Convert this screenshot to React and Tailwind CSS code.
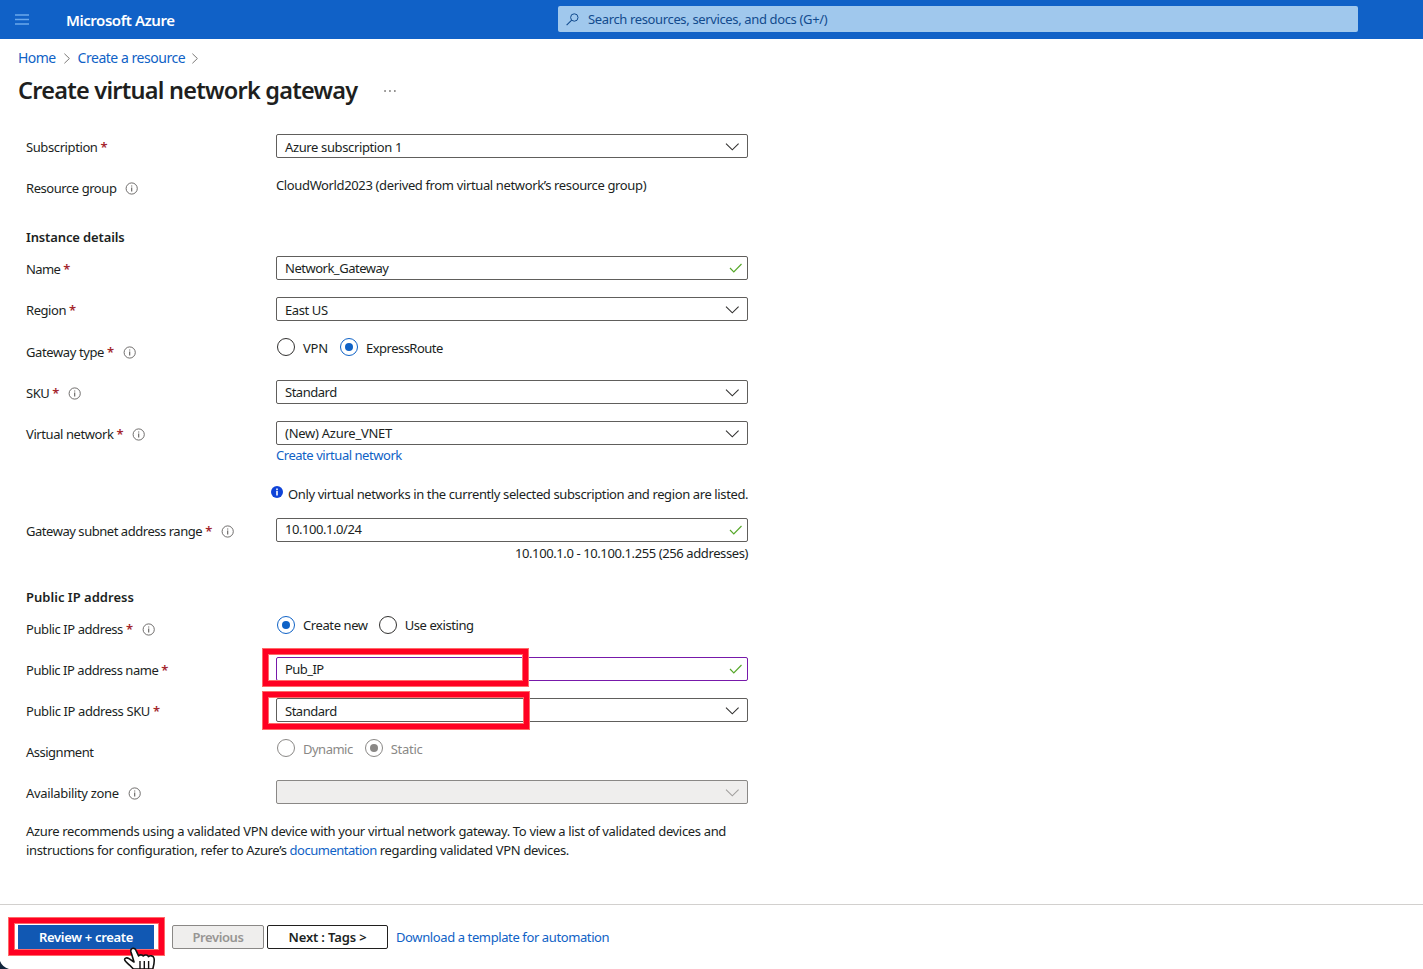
const LINK = "text-[#0f62c6]";

function InfoIcon({ className = "" }) {
  return (
    <svg className={`shrink-0 ${className}`} width="13" height="13" viewBox="0 0 13 13" fill="none">
      <circle cx="6.7" cy="6.5" r="5.6" stroke="#605e5c" strokeWidth="0.9" />
      <path d="M6.7 5.6V9.5" stroke="#605e5c" strokeWidth="1.1" />
      <path d="M6.7 3.4V4.5" stroke="#605e5c" strokeWidth="1.1" />
    </svg>
  );
}

function Chevron({ color = "#323130" }) {
  return (
    <svg className="shrink-0" width="14" height="8" viewBox="0 0 14 8" fill="none">
      <path d="M1 0.7L7.3 6.8L13.6 0.7" stroke={color} strokeWidth="1.1" />
    </svg>
  );
}

function Check() {
  return (
    <svg className="shrink-0" width="13" height="10" viewBox="0 0 13 10" fill="none">
      <path d="M1 5L4.8 8.8L12.5 1" stroke="#57a82b" strokeWidth="1.2" />
    </svg>
  );
}

function BreadcrumbArrow({ className = "" }) {
  return (
    <svg className={`shrink-0 ${className}`} width="7" height="11" viewBox="0 0 7 11" fill="none">
      <path d="M0.4 0.7L5.4 5.5L0.4 10.3" stroke="#7a7876" strokeWidth="1" />
    </svg>
  );
}

function Label({ children, tracking = "", required, info, offset = "mt-1" }) {
  return (
    <div className={`flex h-[18px] w-[250px] shrink-0 items-center ${offset}`}>
      <span className={tracking}>{children}</span>
      {required && <span className="ml-[3px] w-[7px] font-semibold text-[#a4262c]">*</span>}
      {info && <InfoIcon className="ml-[9px] mt-px" />}
    </div>
  );
}

function Select({ children, tracking = "", shift = "", disabled }) {
  return (
    <div
      className={`flex h-6 w-[472px] items-center justify-between rounded-xs border px-2 ${
        disabled ? "border-[#8a8886] bg-[#efeeed]" : "border-[#605e5c] bg-white"
      }`}
    >
      <span className={`${tracking} ${shift}`}>{children}</span>
      <span className="flex pt-[2px]">
        <Chevron color={disabled ? "#a19f9d" : "#323130"} />
      </span>
    </div>
  );
}

function Input({ children, tracking = "", shift = "", focused }) {
  return (
    <div
      className={`flex h-6 w-[472px] items-center justify-between rounded-xs border bg-white pl-2 pr-[5px] ${
        focused ? "border-[#7719aa]" : "border-[#605e5c]"
      }`}
    >
      <span className={`${tracking} ${shift}`}>{children}</span>
      <Check />
    </div>
  );
}

function Radio({ children, checked, disabled, tracking = "", offset = "" }) {
  const ring = disabled ? "border-[#8a8886]" : checked ? "border-[#0f62c6]" : "border-[#323130]";
  return (
    <div className="flex items-start">
      <span className={`flex size-[18px] items-center justify-center rounded-full border ${ring}`}>
        {checked && <span className={`size-2 rounded-full ${disabled ? "bg-[#8a8886]" : "bg-[#0f62c6]"}`} />}
      </span>
      <span className={`ml-2 ${offset} ${tracking} ${disabled ? "text-[#8a8886]" : ""}`}>{children}</span>
    </div>
  );
}

function Highlight({ className }) {
  return (
    <div className={`pointer-events-none absolute border border-[#ff6a68] ${className}`}>
      <div className="size-full border-[5px] border-[#ff0022]">
        <div className="size-full border border-[#ff6a68]" />
      </div>
    </div>
  );
}

function HandCursor() {
  return (
    <svg className="absolute left-[120px] top-[944px]" width="40" height="25" viewBox="0 0 40 25" fill="none">
      <path
        d="M13.4 25L10 21.5C8 19.5 5 17.5 4.6 15.6C4.6 13.7 7 13.4 9 14.6L14 18L11 8C10.4 5.8 11.4 4.3 13 4.2C14.6 4.1 15.6 5.2 16.2 6.8L18.6 12C19.2 10.6 22.3 10.3 23.3 12C24.5 10.5 27.6 10.6 28.5 12.6C30 11.2 33.4 11.5 34 14.2C34.6 17 33.8 21.5 32.8 25Z"
        fill="#fff"
        stroke="#111"
        strokeWidth="1.6"
        strokeLinejoin="round"
      />
      <path d="M20 17V25M24.3 17V25M28.6 17V25" stroke="#111" strokeWidth="1.4" />
    </svg>
  );
}

export default function App() {
  return (
    <div className="relative flex h-[969px] w-[1423px] flex-col overflow-hidden whitespace-nowrap bg-white font-['Noto_Sans','Open_Sans',sans-serif] text-[13px] leading-[18px] tracking-[-0.39px] text-[#201f1e]">
      <header className="flex h-[39px] shrink-0 items-center bg-[#1061c7] pb-px">
        <svg className="ml-[15px]" width="14" height="11" viewBox="0 0 14 11">
          <path d="M0 1H14M0 5.5H14M0 10H14" stroke="#69a8ec" strokeWidth="1.6" />
        </svg>
        <span className="ml-[37px] mt-px w-[492px] text-[15px] font-semibold leading-5 tracking-[-0.45px] text-white">
          Microsoft Azure
        </span>
        <div className="flex h-[26px] w-[800px] items-center rounded-xs bg-[#a0c8ed] pl-2 text-[#124b8e]">
          <svg width="13" height="13" viewBox="0 0 13 13" fill="none">
            <circle cx="8.3" cy="4.5" r="3.7" stroke="#124b8e" strokeWidth="1" />
            <path d="M5.7 7.2L0.6 12.2" stroke="#124b8e" strokeWidth="1.1" />
          </svg>
          <span className="ml-[9px] tracking-[-0.36px]">Search resources, services, and docs (G+/)</span>
        </div>
      </header>

      <nav className={`mt-[9px] flex h-5 items-center pl-[18px] text-sm ${LINK}`}>
        <span className="tracking-[-0.58px]">Home</span>
        <BreadcrumbArrow className="ml-2" />
        <span className="ml-[7px] tracking-[-0.46px]">Create a resource</span>
        <BreadcrumbArrow className="ml-[7px]" />
      </nav>

      <div className="mt-[6px] flex h-8 items-center pl-[18px]">
        <h1 className="text-[23.5px] font-semibold leading-8 tracking-[-0.76px]">Create virtual network gateway</h1>
        <svg className="ml-[27px] mt-[2px]" width="12" height="2" viewBox="0 0 12 2">
          <path d="M0.3 1H1.8M5.2 1H6.7M10.1 1H11.6" stroke="#605e5c" strokeWidth="1.5" />
        </svg>
      </div>

      <main className="flex flex-col pl-[26px] pt-[28px]">
        <div className="flex">
          <Label required tracking="tracking-[-0.4px]">Subscription</Label>
          <Select shift="mt-[2px]" tracking="tracking-[-0.37px]">Azure subscription 1</Select>
        </div>

        <div className="mt-[18px] flex h-[21px]">
          <Label info offset="mt-[3px]" tracking="tracking-[-0.44px]">Resource group</Label>
          <span className="tracking-[-0.365px]">CloudWorld2023 (derived from virtual network’s resource group)</span>
        </div>

        <h2 className="mt-[31px] font-semibold tracking-[-0.13px]">Instance details</h2>
        <div className="mt-[10px] flex">
          <Label required tracking="tracking-[-0.6px]">Name</Label>
          <Input tracking="tracking-[-0.49px]">Network_Gateway</Input>
        </div>
        <div className="mt-[17px] flex">
          <Label required tracking="tracking-[-0.44px]">Region</Label>
          <Select shift="mt-[2px]" tracking="tracking-[-0.4px]">East US</Select>
        </div>
        <div className="mt-[17px] flex h-5">
          <Label required info offset="mt-[5px]">Gateway type</Label>
          <div className="flex gap-3 pl-px">
            <Radio offset="mt-px" tracking="tracking-[-0.18px]">VPN</Radio>
            <Radio checked offset="mt-px" tracking="tracking-[-0.52px]">ExpressRoute</Radio>
          </div>
        </div>
        <div className="mt-[22px] flex">
          <Label required info tracking="tracking-[-0.5px]">SKU</Label>
          <Select tracking="tracking-[-0.48px]">Standard</Select>
        </div>
        <div className="mt-[17px] flex">
          <Label required info tracking="tracking-[-0.42px]">Virtual network</Label>
          <Select tracking="tracking-[-0.26px]">(New) Azure_VNET</Select>
        </div>
        <a className={`ml-[250px] mt-px tracking-[-0.46px] ${LINK}`}>Create virtual network</a>

        <div className="ml-[245px] mt-[21px] flex">
          <svg width="12" height="13" viewBox="0 0 12 13">
            <circle cx="6" cy="7" r="6" fill="#0f43d8" />
            <path d="M6 5.8V10.4M6 3.4V5" stroke="#fff" strokeWidth="1.6" />
          </svg>
          <span className="ml-[5px] tracking-[-0.385px]">
            Only virtual networks in the currently selected subscription and region are listed.
          </span>
        </div>

        <div className="mt-[15px] flex">
          <Label required info tracking="tracking-[-0.46px]">Gateway subnet address range</Label>
          <Input shift="-mt-[2px]" tracking="tracking-[-0.45px]">10.100.1.0/24</Input>
        </div>
        <div className="mt-[2px] w-[722px] text-right tracking-[-0.4px]">10.100.1.0 - 10.100.1.255 (256 addresses)</div>

        <h2 className="mt-[26px] font-semibold tracking-[0.02px]">Public IP address</h2>
        <div className="mt-[10px] flex h-5">
          <Label required info offset="mt-[4px]" tracking="tracking-[-0.42px]">Public IP address</Label>
          <div className="flex gap-[11px] pl-px">
            <Radio checked tracking="tracking-[-0.4px]">Create new</Radio>
            <Radio tracking="tracking-[-0.42px]">Use existing</Radio>
          </div>
        </div>
        <div className="mt-[21px] flex">
          <Label required tracking="tracking-[-0.45px]">Public IP address name</Label>
          <Input focused tracking="tracking-[-0.55px]">Pub_IP</Input>
        </div>
        <div className="mt-[17px] flex">
          <Label required>Public IP address SKU</Label>
          <Select shift="mt-[2px]" tracking="tracking-[-0.48px]">Standard</Select>
        </div>
        <div className="mt-[17px] flex h-5">
          <Label offset="mt-[4px]" tracking="tracking-[-0.5px]">Assignment</Label>
          <div className="flex gap-3 pl-px">
            <Radio disabled offset="mt-px" tracking="tracking-[-0.5px]">Dynamic</Radio>
            <Radio disabled checked offset="mt-px" tracking="tracking-[-0.26px]">Static</Radio>
          </div>
        </div>
        <div className="mt-[21px] flex">
          <Label info tracking="tracking-[-0.33px]">Availability zone</Label>
          <Select disabled />
        </div>

        <p className="mt-[18px] leading-[19px] tracking-[-0.34px]">
          Azure recommends using a validated VPN device with your virtual network gateway. To view a list of validated devices and
          <br />
          <span className="tracking-[-0.355px]">instructions for configuration, refer to Azure’s </span>
          <a className={`tracking-[-0.5px] ${LINK}`}>documentation</a>
          <span> regarding validated VPN devices.</span>
        </p>
      </main>

      <footer className="absolute inset-x-0 bottom-0 flex h-[65px] items-start border-t border-[#d2d0ce] bg-white pl-[18px] pt-5">
        <button className="h-6 w-[136px] bg-[#1158b3] font-semibold tracking-[-0.32px] text-white">Review + create</button>
        <button className="ml-[18px] h-6 w-[92px] rounded-xs border border-[#8a8886] bg-[#efeeed] font-semibold tracking-[-0.4px] text-[#979593]">
          Previous
        </button>
        <button className="ml-[3px] h-6 w-[121px] rounded-xs border border-[#201f1e] bg-white font-semibold tracking-[-0.15px]">
          Next : Tags &gt;
        </button>
        <a className={`ml-2 mt-[3px] ${LINK}`}>Download a template for automation</a>
      </footer>

      <Highlight className="left-[262px] top-[648px] h-[39px] w-[267px]" />
      <Highlight className="left-[262px] top-[691px] h-[39px] w-[268px]" />
      <Highlight className="left-[8px] top-[917px] h-[39px] w-[157px]" />
      <svg className="absolute bottom-0 left-0" width="10" height="10" viewBox="0 0 10 10">
        <path d="M0 2C1.5 6 4.5 8.6 9 10H0Z" fill="#12263c" />
      </svg>
      <HandCursor />
    </div>
  );
}
